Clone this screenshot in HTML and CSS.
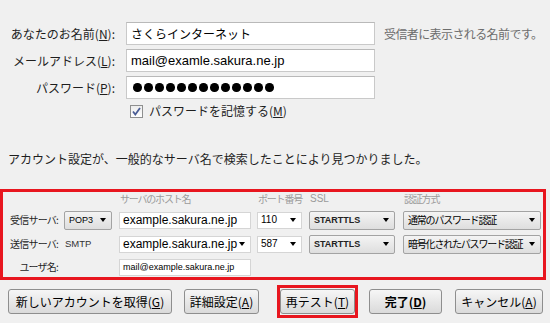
FILE: index.html
```html
<!DOCTYPE html>
<html lang="ja">
<head>
    <meta charset="UTF-8">
    <title>アカウント設定</title>
    <link rel="stylesheet" href="styles.css">
</head>
<body>
    <div class="account-form">
        <div class="row">
            <label class="row-label">あなたのお名前(<u>N</u>):</label>
            <div class="text-field name">さくらインターネット</div>
            <span class="hint">受信者に表示される名前です。</span>
        </div>
        <div class="row">
            <label class="row-label">メールアドレス(<u>L</u>):</label>
            <div class="text-field">mail@examle.sakura.ne.jp</div>
        </div>
        <div class="row">
            <label class="row-label">パスワード(<u>P</u>):</label>
            <div class="text-field password">
                <i></i><i></i><i></i><i></i><i></i><i></i><i></i><i></i><i></i><i></i><i></i><i></i><i></i>
            </div>
        </div>
        <div class="remember">
            <svg class="check" width="13" height="13" viewBox="0 0 13 13">
                <defs>
                    <linearGradient id="cb" x1="0" y1="0" x2="0" y2="1">
                        <stop offset="0" stop-color="#ececec"/>
                        <stop offset="1" stop-color="#ffffff"/>
                    </linearGradient>
                </defs>
                <rect x="0.5" y="0.5" width="12" height="12" fill="url(#cb)" stroke="#8e8f8f"/>
                <path d="M3 6.5 L5.3 9.5 L10 3" fill="none" stroke="#4a5d96" stroke-width="1.8"/>
            </svg>
            <span>パスワードを記憶する(<u>M</u>)</span>
        </div>
    </div>

    <p class="notice">アカウント設定が、一般的なサーバ名で検索したことにより見つかりました。</p>

    <div class="servers">
        <div class="server-grid">
            <span></span>
            <span></span>
            <span class="head">サーバのホスト名</span>
            <span class="head">ポート番号</span>
            <span class="head latin">SSL</span>
            <span class="head">認証方式</span>

            <span class="server-label">受信サーバ:</span>
            <div class="select proto">POP3<i class="arrow"></i></div>
            <div class="box host">example.sakura.ne.jp</div>
            <div class="box port">110<i class="arrow"></i></div>
            <div class="select ssl">STARTTLS<i class="arrow"></i></div>
            <div class="select auth">通常のパスワード認証<i class="arrow"></i></div>

            <span class="server-label">送信サーバ:</span>
            <span class="plain">SMTP</span>
            <div class="box host">example.sakura.ne.jp<i class="arrow"></i></div>
            <div class="box port">587<i class="arrow"></i></div>
            <div class="select ssl">STARTTLS<i class="arrow"></i></div>
            <div class="select auth">暗号化されたパスワード認証<i class="arrow"></i></div>

            <span class="server-label">ユーザ名:</span>
            <span></span>
            <div class="box host user">mail@example.sakura.ne.jp</div>
        </div>
    </div>

    <div class="actions">
        <button class="btn new-account">新しいアカウントを取得(<u>G</u>)</button>
        <button class="btn advanced">詳細設定(<u>A</u>)</button>
        <div class="highlight">
            <button class="btn retest">再テスト(<u>T</u>)</button>
        </div>
        <button class="btn done">完了(<u>D</u>)</button>
        <button class="btn cancel">キャンセル(<u>A</u>)</button>
    </div>
</body>
</html>
```

FILE: styles.css
```css
body {
    margin: 0;
    width: 550px;
    height: 323px;
    overflow: hidden;
    background-color: #f0f0f0;
    font-family: "Noto Sans CJK JP", sans-serif;
    font-size: 12px;
    line-height: 16px;
    color: #1e1e1e;
}

.account-form {
    padding-top: 22px;
}

.row {
    display: flex;
    align-items: center;
    height: 23px;
    margin-bottom: 4px;
}

.row-label {
    width: 115px;
    margin-right: 11px;
    text-align: right;
    white-space: nowrap;
}

.text-field {
    display: flex;
    align-items: center;
    width: 249px;
    height: 23px;
    box-sizing: border-box;
    padding-left: 4px;
    border: 1px solid #c9c9c9;
    border-top-color: #b9b9b9;
    background-color: #fff;
    font-family: "Liberation Sans", "Noto Sans CJK JP", sans-serif;
    font-size: 13px;
    color: #000;
}

.text-field.name {
    font-family: "Noto Sans CJK JP", sans-serif;
    font-size: 12px;
}

.password {
    gap: 2.5px;
    padding-left: 6px;
}

.password i {
    width: 8.5px;
    height: 8.5px;
    border-radius: 50%;
    background-color: #000;
}

.hint {
    margin-left: 9px;
    color: #6d6d6d;
    white-space: nowrap;
    letter-spacing: -0.6px;
}

.remember {
    display: flex;
    align-items: center;
    gap: 6px;
    height: 16px;
    margin: 3px 0 0 130px;
}

.notice {
    margin: 32px 0 0 8px;
}

.servers {
    width: 546px;
    box-sizing: border-box;
    margin-top: 22px;
    padding: 0 0 1px 7px;
    border: 3px solid #e8161f;
    font-size: 10px;
    line-height: 14px;
}

.server-grid {
    display: grid;
    grid-template-columns: 54px 55px 138px 52px 94px 138px;
    grid-template-rows: 14px 20px 20px 18px;
    row-gap: 4px;
    align-items: center;
}

.head {
    padding-left: 1px;
    color: #9b9b9b;
    white-space: nowrap;
    letter-spacing: -1.2px;
}

.head.latin {
    font-family: "Liberation Sans", sans-serif;
    letter-spacing: 0;
}

.server-label {
    padding-right: 6px;
    text-align: right;
    white-space: nowrap;
    letter-spacing: -0.8px;
}

.plain {
    padding-left: 1px;
    font-family: "Liberation Sans", sans-serif;
    font-size: 9.5px;
    color: #333;
}

.select,
.box {
    display: flex;
    align-items: center;
    justify-content: space-between;
    box-sizing: border-box;
    white-space: nowrap;
    color: #000;
}

.select {
    height: 19px;
    padding: 0 5px 0 4px;
    border: 1px solid #a3a3a3;
    border-radius: 2px;
    background: linear-gradient(#f4f4f4, #dedede);
}

.select.ssl {
    width: 86px;
    font-family: "Liberation Sans", sans-serif;
    font-size: 9px;
    font-weight: bold;
    color: #222;
}

.select.proto {
    width: 48px;
    font-family: "Liberation Sans", sans-serif;
    font-size: 9px;
}

.select.auth {
    width: 138px;
    letter-spacing: -1.2px;
}

.box {
    height: 17px;
    padding: 0 5px 0 3px;
    border: 1px solid #d5d5d5;
    background-color: #fff;
}

.box.host {
    width: 132px;
    font-family: "Liberation Sans", sans-serif;
    font-size: 12px;
}

.box.user {
    font-size: 9px;
}

.box.port {
    width: 45px;
    font-family: "Liberation Sans", sans-serif;
    font-size: 10px;
}

.arrow {
    width: 0;
    height: 0;
    border-left: 3.5px solid transparent;
    border-right: 3.5px solid transparent;
    border-top: 4px solid #000;
}

.actions {
    display: flex;
    align-items: center;
    height: 33px;
    margin: 5px 0 0 8px;
}

.btn {
    height: 25px;
    box-sizing: border-box;
    padding: 0;
    border: 1px solid #8e8e8e;
    border-radius: 3px;
    background: linear-gradient(#f6f6f6, #dadada);
    font-family: "Noto Sans CJK JP", sans-serif;
    font-size: 12px;
    color: #000;
    white-space: nowrap;
}

.btn.new-account {
    width: 164px;
}

.btn.advanced {
    width: 75px;
    margin-left: 12px;
}

.highlight {
    display: flex;
    margin-left: 18px;
    padding: 1px 0;
    border: 3px solid #e8161f;
}

.btn.retest {
    width: 75px;
}

.btn.done {
    width: 73px;
    margin-left: 11px;
    font-weight: bold;
}

.btn.cancel {
    width: 88px;
    margin-left: 13px;
}
```
